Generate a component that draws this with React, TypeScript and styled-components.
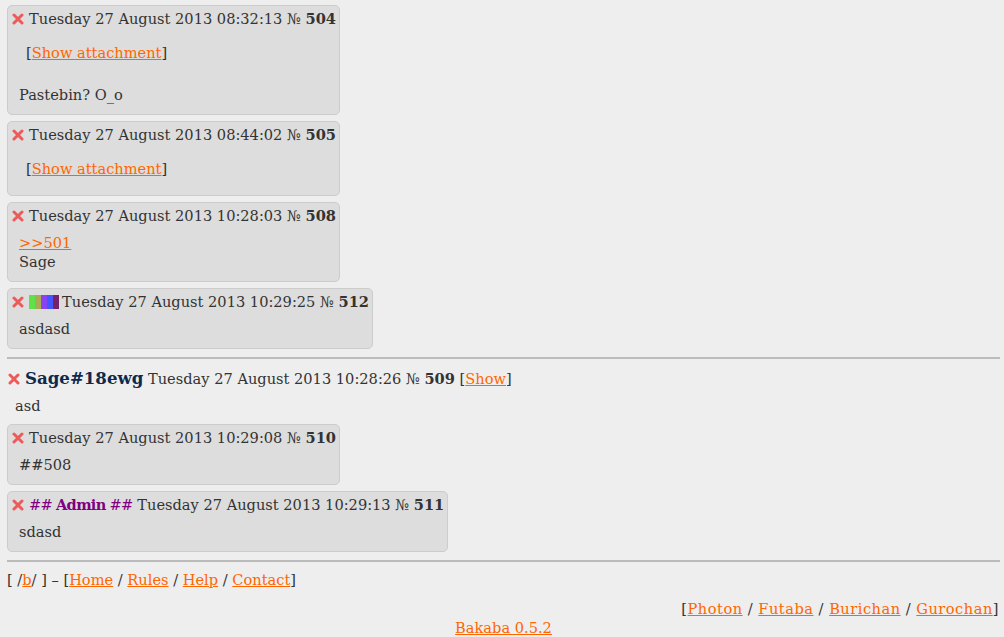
import styled, { createGlobalStyle } from 'styled-components'

const GlobalStyle = createGlobalStyle`
  body {
    margin: 0;
    background: #eeeeee;
    color: #333333;
    font-family: "DejaVu Serif", "Liberation Serif", serif;
    font-size: 14.6px;
    line-height: 19px;
  }
`

const Page = styled.div`
  padding: 5px 4px 0 7px;
`

const Link = styled.a`
  color: #ff6600;
  text-decoration: underline;
  cursor: pointer;
`

const Reply = styled.div`
  display: table;
  background: #dddddd;
  border: 1px solid #cccccc;
  border-radius: 5px;
  padding: 3px 3px 10px 4px;
  margin-bottom: 6px;
`

const PostHead = styled.div<{ $op?: boolean }>`
  display: flex;
  align-items: center;
  gap: 5px;
  white-space: nowrap;
  padding-left: ${({ $op }) => ($op ? '1px' : '0')};
`

const Num = styled.b`
  font-weight: bold;
`

const Attachment = styled.div`
  margin: 15px 0 7px 14px;
`

const Body = styled.div<{ $indent?: number }>`
  margin: 8px 0 0 ${({ $indent }) => $indent ?? 7}px;
  ${Attachment} + & {
    margin-top: 23px;
  }
`

const Divider = styled.hr`
  border: 0;
  border-top: 2px solid #bbbbbb;
  margin: 8px 0 0;
`

const OpPost = styled.div`
  padding-top: 10px;
  margin-bottom: 9px;
`

const OpName = styled.b`
  color: #0d2a4c;
  font-size: 16.6px;
`

const AdminTag = styled.span`
  color: #800080;
  letter-spacing: -0.7px;
  b {
    font-weight: bold;
  }
`

const Stripes = styled.span`
  display: inline-flex;
  height: 14px;
  margin-right: -2px;
`

const Stripe = styled.span<{ $c: string }>`
  width: 6px;
  background: ${({ $c }) => $c};
`

const Footer = styled.div`
  padding-top: 8px;
`

const FooterRight = styled.div`
  text-align: right;
  margin-top: 10px;
  padding-right: 1px;
  letter-spacing: 0.5px;
`

const FooterCenter = styled.div`
  text-align: center;
`

const DelIcon = () => (
  <svg width="12" height="12" viewBox="0 0 12 12">
    <path d="M2 2 L10 10 M10 2 L2 10" stroke="#ee5a5a" strokeWidth="3" strokeLinecap="round" />
  </svg>
)

const Thread = () => (
  <>
    <Reply>
      <PostHead>
        <DelIcon />
        <span>Tuesday 27 August 2013 08:32:13 № <Num>504</Num></span>
      </PostHead>
      <Attachment>[<Link>Show attachment</Link>]</Attachment>
      <Body>Pastebin? O_o</Body>
    </Reply>
    <Reply>
      <PostHead>
        <DelIcon />
        <span>Tuesday 27 August 2013 08:44:02 № <Num>505</Num></span>
      </PostHead>
      <Attachment>[<Link>Show attachment</Link>]</Attachment>
    </Reply>
    <Reply>
      <PostHead>
        <DelIcon />
        <span>Tuesday 27 August 2013 10:28:03 № <Num>508</Num></span>
      </PostHead>
      <Body>
        <Link>&gt;&gt;501</Link>
        <br />
        Sage
      </Body>
    </Reply>
    <Reply>
      <PostHead>
        <DelIcon />
        <Stripes>
          {['#5ee14a', '#aaaa55', '#8844ee', '#4455ff', '#772266'].map((c) => (
            <Stripe key={c} $c={c} />
          ))}
        </Stripes>
        <span>Tuesday 27 August 2013 10:29:25 № <Num>512</Num></span>
      </PostHead>
      <Body>asdasd</Body>
    </Reply>
  </>
)

export default function App() {
  return (
    <Page>
      <GlobalStyle />
      <Thread />
      <Divider />
      <OpPost>
        <PostHead $op>
          <DelIcon />
          <span>
            <OpName>Sage#18ewg</OpName> Tuesday 27 August 2013 10:28:26 № <Num>509</Num> [<Link>Show</Link>]
          </span>
        </PostHead>
        <Body $indent={8}>asd</Body>
      </OpPost>
      <Reply>
        <PostHead>
          <DelIcon />
          <span>Tuesday 27 August 2013 10:29:08 № <Num>510</Num></span>
        </PostHead>
        <Body>##508</Body>
      </Reply>
      <Reply>
        <PostHead>
          <DelIcon />
          <span>
            <AdminTag>## <b>Admin</b> ##</AdminTag> Tuesday 27 August 2013 10:29:13 № <Num>511</Num>
          </span>
        </PostHead>
        <Body>sdasd</Body>
      </Reply>
      <Divider />
      <Footer>
        [ /<Link>b</Link>/ ] – [<Link>Home</Link> / <Link>Rules</Link> / <Link>Help</Link> / <Link>Contact</Link>]
      </Footer>
      <FooterRight>
        [<Link>Photon</Link> / <Link>Futaba</Link> / <Link>Burichan</Link> / <Link>Gurochan</Link>]
      </FooterRight>
      <FooterCenter>
        <Link>Bakaba 0.5.2</Link>
      </FooterCenter>
    </Page>
  )
}
